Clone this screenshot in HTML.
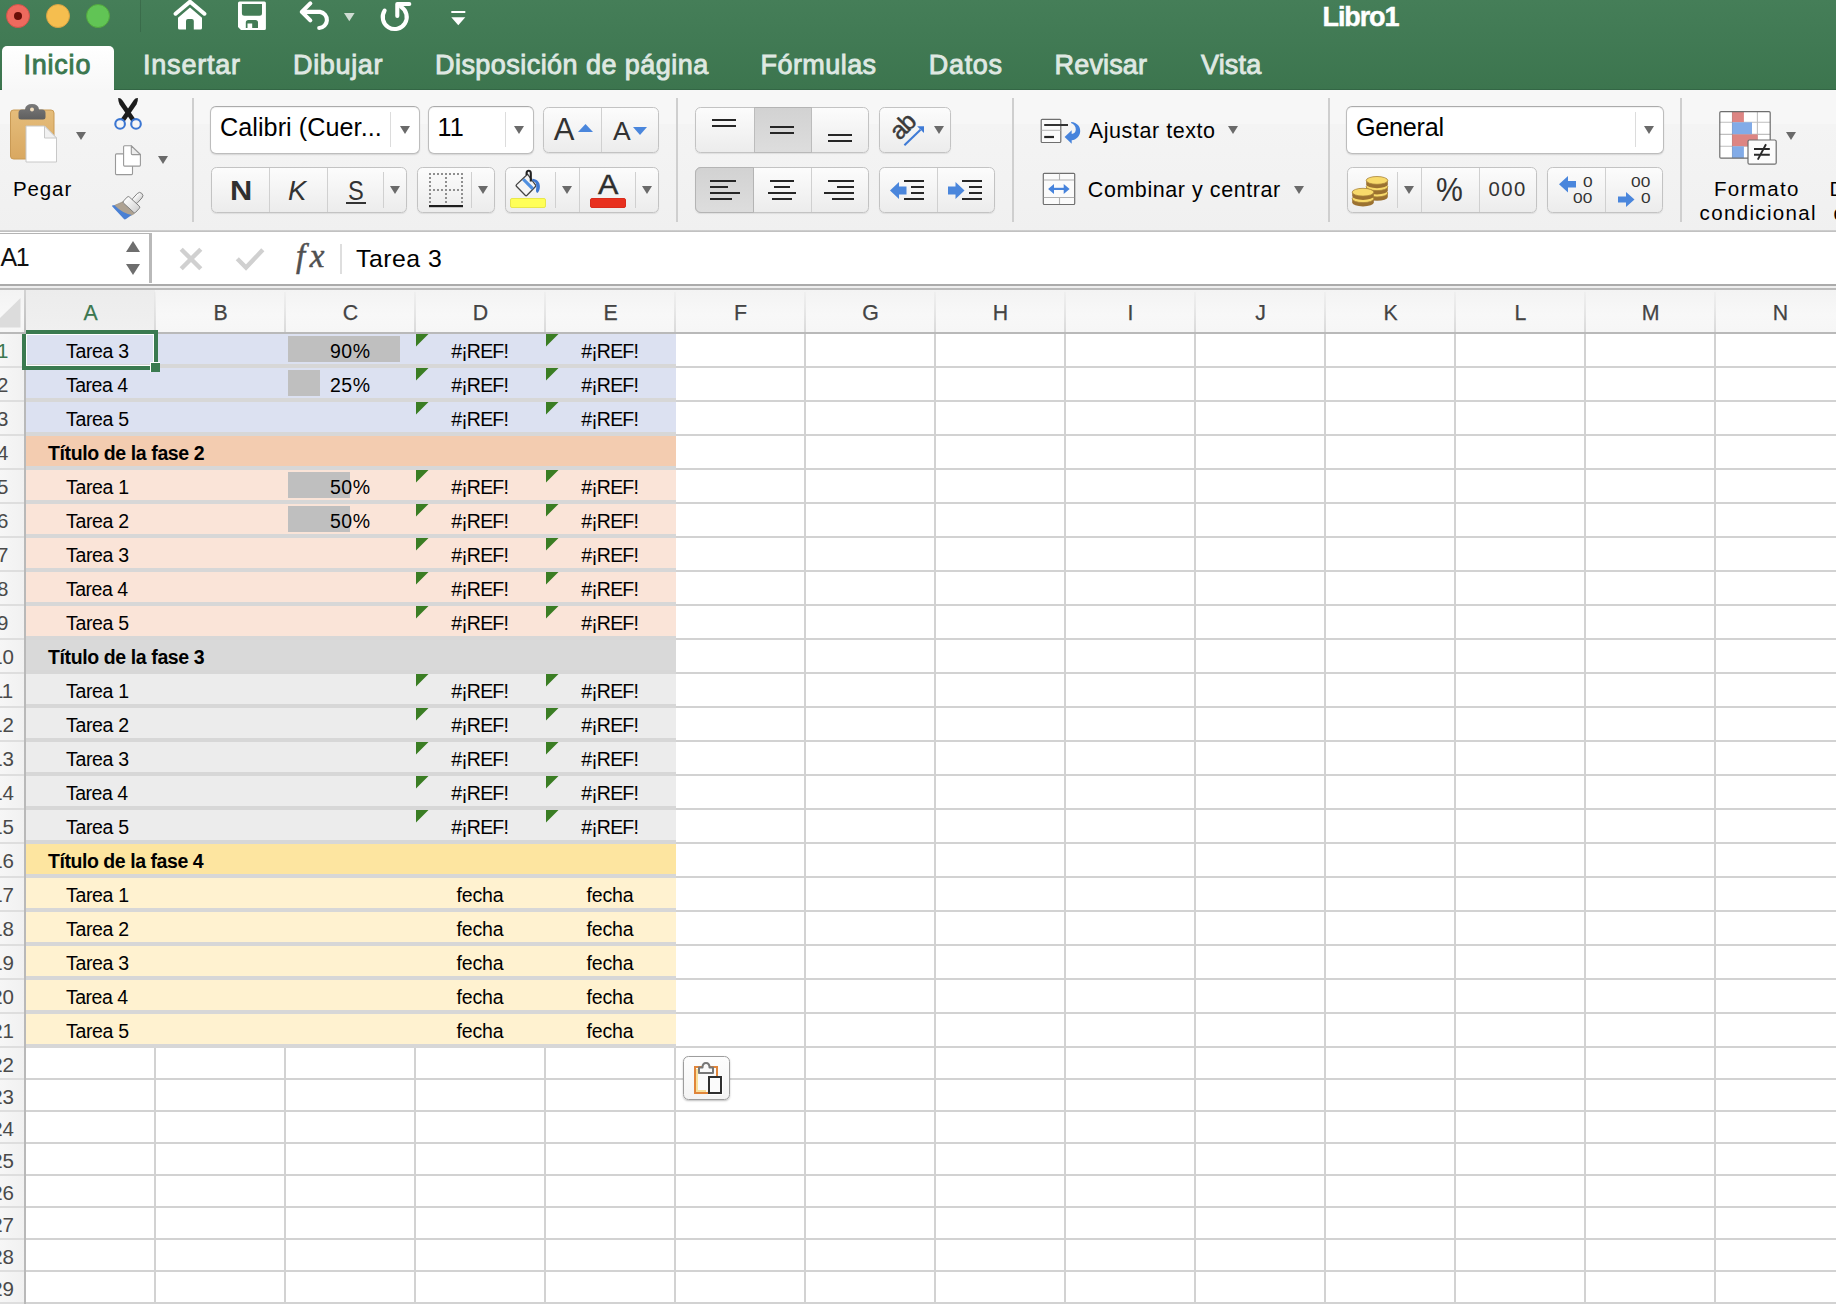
<!DOCTYPE html>
<html lang="es"><head><meta charset="utf-8"><title>Libro1</title>
<style>
html,body{margin:0;padding:0;background:#fff;}
body{width:1836px;height:1304px;overflow:hidden;font-family:"Liberation Sans",sans-serif;}
#app{position:relative;width:1836px;height:1304px;overflow:hidden;background:#fff;}
#app div,#app span.t,#app svg{position:absolute;box-sizing:border-box;}
#app svg{overflow:visible;display:block;}
span.t{white-space:pre;display:block;}
.btn{border:1px solid #c3c3c3;border-radius:5.5px;background:linear-gradient(#fcfcfc,#ececec);box-shadow:0 1px 1px rgba(0,0,0,.08);}
.combo{border:1px solid #bdbdbd;border-top-color:#ababab;border-radius:6px;background:#fff;box-shadow:0 1px 1.5px rgba(0,0,0,.12), inset 0 1px 1px rgba(0,0,0,.06);}
.vsep{background:#c9c9c9;width:1px;}
.sel{background:linear-gradient(#d3d3d3,#dcdcdc);}

</style></head>
<body>
<div id="app">
<div style="left:0px;top:0px;width:1836px;height:90px;background:linear-gradient(#457e58 0%,#417a54 45%,#3c754e 100%);"></div>
<div style="left:6px;top:4px;width:24px;height:24px;border-radius:50%;background:#ee6a5e;border:1px solid #cf544a;"></div>
<div style="left:46px;top:4px;width:24px;height:24px;border-radius:50%;background:#f5be4f;border:1px solid #d6a243;"></div>
<div style="left:86px;top:4px;width:24px;height:24px;border-radius:50%;background:#61c455;border:1px solid #52a73e;"></div>
<div style="left:14px;top:12px;width:8px;height:8px;border-radius:50%;background:#6a0e08;"></div>
<div style="left:140px;top:0px;width:1px;height:32px;background:rgba(0,0,0,.13);"></div>
<svg style="left:170px;top:0px;" width="40" height="32" viewBox="170 0 40 32"><path d="M175.600 13.700 L190 1.700 L204.400 13.700" fill="none" stroke="#fff" stroke-width="4" stroke-linecap="round" stroke-linejoin="miter"/><path d="M178 17.800 L190 7.500 L202 17.800 V28 Q202 29.500 200.500 29.500 H193.800 V21 Q193.800 19 191.800 19 H188 Q186 19 186 21 V29.500 H179.500 Q178 29.500 178 28 Z" fill="#fff"/></svg>
<svg style="left:236px;top:0px;" width="32" height="32" viewBox="236 0 32 32"><path d="M239.500 1.500 H264.400 Q265.900 1.500 265.900 3 V28.400 Q265.900 29.900 264.400 29.900 H241 L238 26.900 V3 Q238 1.500 239.500 1.500 Z M241.900 3.900 V13.200 Q241.900 15.700 244.400 15.700 H259.500 Q262 15.700 262 13.200 V3.900 Z M245.800 28 V22.600 Q245.800 20.100 248.300 20.100 H255.500 Q258 20.100 258 22.600 V28 H252.200 V23.500 H247.500 V28 Z" fill="#fff" fill-rule="evenodd"/></svg>
<svg style="left:296px;top:0px;" width="38" height="32" viewBox="296 0 38 32"><path d="M310.300 3.400 L301.800 11.900 L310.300 20.400" fill="none" stroke="#fff" stroke-width="4.100" stroke-linecap="round" stroke-linejoin="round"/><path d="M302.500 11.900 H320 A8.100 8.100 0 0 1 319.200 28" fill="none" stroke="#fff" stroke-width="4.100" stroke-linecap="round"/></svg>
<svg style="left:343.7px;top:12.7px;" width="11" height="8.5" viewBox="0 0 11 8.5"><path d="M0 0 H10.600 L5.300 8.200 Z" fill="#cfdcd3"/></svg>
<svg style="left:376px;top:0px;" width="38" height="34" viewBox="376 0 38 34"><path d="M384.600 10.600 A12 12 0 1 0 401 6.800" fill="none" stroke="#fff" stroke-width="4.100" stroke-linecap="round"/><path d="M397.300 16 V4 H409.300" fill="none" stroke="#fff" stroke-width="4.100" stroke-linecap="round" stroke-linejoin="round"/></svg>
<svg style="left:450px;top:10px;" width="17" height="17" viewBox="0 0 17 17"><rect x="1.300" y="1" width="14" height="2" fill="#fff"/><path d="M1.300 7.200 H15.300 L8.300 15.300 Z" fill="#fff"/></svg>
<span class="t" id="title" style="top:1.14px;font-size:27px;line-height:32px;color:#fff;font-weight:bold;letter-spacing:-1.100px;left:1322.5px;-webkit-text-stroke:.45px #fff;">Libro1</span>
<div style="left:2px;top:46px;width:112px;height:46px;border-radius:5px 5px 0 0;background:linear-gradient(#ffffff,#f7f7f7);"></div>
<span class="t" id="tab0" style="top:48.84px;font-size:27px;line-height:32px;color:#3b774f;letter-spacing:0.800px;left:23.4px;-webkit-text-stroke:0.9px #3b774f;">Inicio</span>
<span class="t" id="tab1" style="top:48.84px;font-size:27px;line-height:32px;color:#dfe8e2;letter-spacing:0.786px;left:143px;-webkit-text-stroke:0.9px #dfe8e2;">Insertar</span>
<span class="t" id="tab2" style="top:48.84px;font-size:27px;line-height:32px;color:#dfe8e2;letter-spacing:0.667px;left:293px;-webkit-text-stroke:0.9px #dfe8e2;">Dibujar</span>
<span class="t" id="tab3" style="top:48.84px;font-size:27px;line-height:32px;color:#dfe8e2;letter-spacing:0.450px;left:435px;-webkit-text-stroke:0.9px #dfe8e2;">Disposición de página</span>
<span class="t" id="tab4" style="top:48.84px;font-size:27px;line-height:32px;color:#dfe8e2;letter-spacing:0.443px;left:760.5px;-webkit-text-stroke:0.9px #dfe8e2;">Fórmulas</span>
<span class="t" id="tab5" style="top:48.84px;font-size:27px;line-height:32px;color:#dfe8e2;letter-spacing:0.675px;left:928.8px;-webkit-text-stroke:0.9px #dfe8e2;">Datos</span>
<span class="t" id="tab6" style="top:48.84px;font-size:27px;line-height:32px;color:#dfe8e2;letter-spacing:0.150px;left:1054.6px;-webkit-text-stroke:0.9px #dfe8e2;">Revisar</span>
<span class="t" id="tab7" style="top:48.84px;font-size:27px;line-height:32px;color:#dfe8e2;letter-spacing:0.175px;left:1201px;-webkit-text-stroke:0.9px #dfe8e2;">Vista</span>
<div style="left:114px;top:89px;width:1722px;height:1px;background:#336645;"></div>
<div style="left:0px;top:89px;width:2px;height:1px;background:#336645;"></div>
<div style="left:0px;top:90px;width:1836px;height:141px;background:linear-gradient(#f7f7f7 0%,#f7f7f7 24%,#f4f4f4 24.300%,#f0f0f0 100%);"></div>
<div style="left:114px;top:90px;width:1722px;height:1px;background:#356a46;opacity:.0"></div>
<div style="left:0px;top:230.3px;width:1836px;height:2px;background:linear-gradient(#d2d2d2,#bbbbbb);"></div>
<div style="left:192px;top:98px;width:2px;height:124px;background:#cfcfcf;"></div>
<div style="left:676px;top:98px;width:2px;height:124px;background:#cfcfcf;"></div>
<div style="left:1012px;top:98px;width:2px;height:124px;background:#cfcfcf;"></div>
<div style="left:1328px;top:98px;width:2px;height:124px;background:#cfcfcf;"></div>
<div style="left:1680px;top:98px;width:2px;height:124px;background:#cfcfcf;"></div>
<svg style="left:10px;top:103px;" width="48" height="60" viewBox="0 0 48 60"><defs><linearGradient id="cb" x1="0" y1="0" x2="0" y2="1"><stop offset="0" stop-color="#e5bd7b"/><stop offset="1" stop-color="#d9a861"/></linearGradient><linearGradient id="clip" x1="0" y1="0" x2="0" y2="1"><stop offset="0" stop-color="#7a7a7a"/><stop offset="1" stop-color="#5f5f5f"/></linearGradient></defs><rect x="0.5" y="7" width="43.5" height="49" rx="3" fill="url(#cb)" stroke="#c99a55" stroke-width="1"/><path d="M8.5 10 Q8.5 6.5 12 6.5 H15 Q15.5 1 22 1 Q28.500 1 29 6.500 H32 Q35.5 6.5 35.5 10 V14 Q35.5 16.5 33 16.5 H11 Q8.5 16.5 8.5 14 Z" fill="url(#clip)"/><circle cx="22" cy="6.4" r="2" fill="#f3e0c0"/><path d="M16 23 H34.5 L46.500 35 V59 H16 Z" fill="#fff" stroke="#c8c8c8" stroke-width="1"/><path d="M34.5 23 V35 H46.5 Z" fill="#f1f1f1" stroke="#c8c8c8" stroke-width="1" stroke-linejoin="round"/></svg>
<svg style="left:76px;top:132px;" width="10" height="8" viewBox="0 0 10 8"><path d="M0 0 H10 L5 8 Z" fill="#6a6a6a"/></svg>
<span class="t" id="pegar" style="top:176.40px;font-size:20.5px;line-height:25px;color:#000;letter-spacing:0.875px;left:13px;">Pegar</span>
<svg style="left:110px;top:94px;" width="36" height="40" viewBox="110 94 36 40"><path d="M118.200 98.100 Q120.800 97.900 122.400 100.200 L135.600 119.400 L131.600 121.800 L119.600 104.500 Q118 101.500 118.200 98.100 Z" fill="#1c1c1c"/><path d="M137.900 98.100 Q135.300 97.900 133.700 100.200 L120.500 119.400 L124.500 121.800 L136.500 104.500 Q138.100 101.500 137.900 98.100 Z" fill="#1c1c1c"/><circle cx="120.100" cy="123.900" r="4.800" fill="#f6f6f6" stroke="#3b76d2" stroke-width="2.100"/><circle cx="136" cy="123.900" r="4.800" fill="#f6f6f6" stroke="#3b76d2" stroke-width="2.100"/></svg>
<svg style="left:112px;top:142px;" width="32" height="36" viewBox="112 142 32 36"><rect x="115.500" y="153.900" width="17" height="20.700" rx="1" fill="#fff" stroke="#999" stroke-width="1.100"/><path d="M124.600 145.800 H131.300 L140.400 154.600 V165.100 Q140.400 166.100 139.400 166.100 H124.600 Q123.600 166.100 123.600 165.100 V146.800 Q123.600 145.800 124.600 145.800 Z" fill="#fff" stroke="#999" stroke-width="1.100"/><path d="M131.300 145.800 V153.600 Q131.300 154.600 132.300 154.600 H140.400 Z" fill="#ececec" stroke="#999" stroke-width="1.100" stroke-linejoin="round"/></svg>
<svg style="left:158px;top:156.3px;" width="10" height="8" viewBox="0 0 10 8"><path d="M0 0 H10 L5 8 Z" fill="#6a6a6a"/></svg>
<svg style="left:108px;top:188px;" width="40" height="36" viewBox="108 188 40 36"><defs><linearGradient id="fer" x1="0" y1="0" x2="1" y2="0"><stop offset="0" stop-color="#fdfdfd"/><stop offset="1" stop-color="#d4d4d4"/></linearGradient></defs><path d="M123.100 201.700 L134.400 213.500 L131.700 215.100 L124 214 L114.400 205.500 Z" fill="#aea292" stroke="#8c8172" stroke-width=".600"/><path d="M114.400 205.300 Q122 213 131.700 215.100 L126 219 Q124.700 219.900 123.700 218.800 L112.300 206.600 Q111.500 205.500 112.800 205.300 Z" fill="#4a80d4"/><g transform="translate(131.450 204.650) rotate(42.500)"><rect x="-3.200" y="-15.300" width="6.400" height="13" rx="3.200" fill="url(#fer)" stroke="#7d7d7d" stroke-width=".900"/><rect x="-8.300" y="-4.200" width="16.600" height="8.400" rx="1.600" fill="url(#fer)" stroke="#7d7d7d" stroke-width=".900"/></g></svg>
<div class="combo" style="left:210px;top:106px;width:210px;height:48px;"></div>
<div style="left:390px;top:112px;width:1px;height:35px;background:#dcdcdc;"></div>
<svg style="left:400px;top:126px;" width="10" height="8" viewBox="0 0 10 8"><path d="M0 0 H10 L5 8 Z" fill="#6a6a6a"/></svg>
<span class="t" id="fontname" style="top:112.27px;font-size:25.2px;line-height:30px;color:#000;letter-spacing:0.053px;left:220px;">Calibri (Cuer...</span>
<div class="combo" style="left:428px;top:106px;width:106px;height:48px;"></div>
<div style="left:505px;top:112px;width:1px;height:35px;background:#dcdcdc;"></div>
<svg style="left:514px;top:126px;" width="10" height="8" viewBox="0 0 10 8"><path d="M0 0 H10 L5 8 Z" fill="#6a6a6a"/></svg>
<span class="t" id="fontsize" style="top:112.27px;font-size:25.2px;line-height:30px;color:#000;left:437.5px;">11</span>
<div class="btn" style="left:543px;top:107px;width:116px;height:46px;"></div>
<div style="left:601px;top:108px;width:1px;height:44px;background:#d0d0d0;"></div>
<span class="t" id="Abig" style="top:110.66px;font-size:31px;line-height:37px;color:#333;left:553.8px;">A</span>
<svg style="left:577.5px;top:124px;" width="15" height="8" viewBox="0 0 15 8"><path d="M0 8 L7.500 0 L15 8 Z" fill="#4a86dc"/></svg>
<span class="t" id="Asmall" style="top:114.72px;font-size:26.5px;line-height:32px;color:#333;left:613px;">A</span>
<svg style="left:633px;top:127px;" width="14" height="8" viewBox="0 0 14 8"><path d="M0 0 H14 L7 8 Z" fill="#4a86dc"/></svg>
<div class="btn" style="left:211px;top:167px;width:196px;height:46px;"></div>
<div style="left:269px;top:168px;width:1px;height:44px;background:#d0d0d0;"></div>
<div style="left:327px;top:168px;width:1px;height:44px;background:#d0d0d0;"></div>
<div style="left:383px;top:172px;width:1px;height:36px;background:#d0d0d0;"></div>
<span class="t" id="bN" style="top:173.77px;font-size:27.5px;line-height:33px;color:#303030;font-weight:bold;left:229.5px;transform:scaleX(1.12);transform-origin:0 0;">N</span>
<span class="t" id="bK" style="top:173.77px;font-size:27.5px;line-height:33px;color:#333;font-style:italic;left:288px;">K</span>
<span class="t" id="bS" style="top:173.77px;font-size:27.5px;line-height:33px;color:#333;left:348.3px;transform:scaleX(.86);transform-origin:0 0;">S</span>
<div style="left:346px;top:202px;width:20px;height:2px;background:#333;"></div>
<svg style="left:390px;top:186px;" width="10" height="8" viewBox="0 0 10 8"><path d="M0 0 H10 L5 8 Z" fill="#6a6a6a"/></svg>
<div class="btn" style="left:417px;top:167px;width:78px;height:46px;"></div>
<svg style="left:428px;top:172px;" width="37" height="37" viewBox="428 172 37 37"><g stroke="#8f8f8f" stroke-width="2" stroke-dasharray="2 2" fill="none"><path d="M429 174 H463"/><path d="M429 190 H463"/><path d="M430 173 V203"/><path d="M446 173 V203"/><path d="M462 173 V203"/></g><rect x="429" y="205" width="34" height="2.200" fill="#1e1e1e"/></svg>
<div style="left:471px;top:172px;width:1px;height:36px;background:#d0d0d0;"></div>
<svg style="left:478px;top:186px;" width="10" height="8" viewBox="0 0 10 8"><path d="M0 0 H10 L5 8 Z" fill="#6a6a6a"/></svg>
<div class="btn" style="left:505px;top:167px;width:154px;height:46px;"></div>
<div style="left:579px;top:168px;width:1px;height:44px;background:#d0d0d0;"></div>
<svg style="left:508px;top:166px;" width="40" height="32" viewBox="508 166 40 32"><path d="M527.500 174.200 L535.600 185.200 Q536.100 185.900 535.500 186.500 L527 195.300 Q526.100 196.100 525.200 195.300 L516.400 186.300 Q515.700 185.400 516.500 184.600 Z" fill="#f5f5f5" stroke="#444" stroke-width="1.300" stroke-linejoin="round"/><path d="M524.500 178.200 L533.800 187.500 L531.700 189.900 L522.100 180.300 Z" fill="#4f8fe0"/><path d="M532.400 178.800 C536.500 179 540.200 182 539.900 187 C539.700 190 538.800 192 537.400 193 C536.300 192.300 535.900 191.500 536 190 C536.600 186 536.500 183.500 535 182.200 C534 181.400 533 181.200 532.400 181.200 Z" fill="#3f78d0"/><path d="M526.600 175 V173.300 A2.100 2.500 0 0 1 530.800 173.300 V181.500" fill="none" stroke="#222" stroke-width="2.100"/></svg>
<div style="left:510px;top:198px;width:36px;height:10px;background:#ffff57;border:1px solid #e9e74b;border-radius:2px;"></div>
<div style="left:555px;top:172px;width:1px;height:36px;background:#d0d0d0;"></div>
<svg style="left:562px;top:186px;" width="10" height="8" viewBox="0 0 10 8"><path d="M0 0 H10 L5 8 Z" fill="#6a6a6a"/></svg>
<span class="t" id="Acolor" style="top:166.99px;font-size:28.3px;line-height:34px;color:#2e2e2e;left:597.7px;transform:scaleX(1.08);transform-origin:0 0;-webkit-text-stroke:.4px #2e2e2e;">A</span>
<div style="left:590px;top:198px;width:36px;height:10px;background:#e8301e;border:1px solid #d92c1c;border-radius:2px;"></div>
<div style="left:635px;top:172px;width:1px;height:36px;background:#d0d0d0;"></div>
<svg style="left:642px;top:186px;" width="10" height="8" viewBox="0 0 10 8"><path d="M0 0 H10 L5 8 Z" fill="#6a6a6a"/></svg>
<div class="btn" style="left:695px;top:107px;width:174px;height:46px;"></div>
<div style="left:753.5px;top:107px;width:58px;height:46px;background:linear-gradient(#d2d2d2,#dddddd);border-top:1px solid #b4b4b4;border-bottom:1px solid #b9b9b9;border-left:1px solid #bcbcbc;border-right:1px solid #bcbcbc;"></div>
<div style="left:712px;top:118.5px;width:24px;height:2px;background:#262626;"></div>
<div style="left:712px;top:124.5px;width:24px;height:2px;background:#262626;"></div>
<div style="left:770px;top:126px;width:24px;height:2px;background:#262626;"></div>
<div style="left:770px;top:132px;width:24px;height:2px;background:#262626;"></div>
<div style="left:828px;top:134px;width:24px;height:2px;background:#262626;"></div>
<div style="left:828px;top:140px;width:24px;height:2px;background:#262626;"></div>
<div style="left:811.5px;top:108px;width:1px;height:44px;background:#d0d0d0;opacity:0"></div>
<div class="btn" style="left:695px;top:167px;width:174px;height:46px;"></div>
<div style="left:695px;top:167px;width:58.5px;height:46px;background:linear-gradient(#d2d2d2,#dddddd);border:1px solid #b4b4b4;border-radius:6px 0 0 6px;"></div>
<div style="left:811px;top:168px;width:1px;height:44px;background:#d0d0d0;"></div>
<div style="left:710px;top:179.8px;width:26px;height:2px;background:#262626;"></div>
<div style="left:710px;top:185.9px;width:18px;height:2px;background:#262626;"></div>
<div style="left:710px;top:192.0px;width:30px;height:2px;background:#262626;"></div>
<div style="left:710px;top:198.10000000000002px;width:22px;height:2px;background:#262626;"></div>
<div style="left:770px;top:179.8px;width:24px;height:2px;background:#262626;"></div>
<div style="left:774px;top:185.9px;width:16px;height:2px;background:#262626;"></div>
<div style="left:768px;top:192.0px;width:28px;height:2px;background:#262626;"></div>
<div style="left:772px;top:198.10000000000002px;width:20px;height:2px;background:#262626;"></div>
<div style="left:828px;top:179.8px;width:26px;height:2px;background:#262626;"></div>
<div style="left:836.5px;top:185.9px;width:17.5px;height:2px;background:#262626;"></div>
<div style="left:824px;top:192.0px;width:30px;height:2px;background:#262626;"></div>
<div style="left:832px;top:198.10000000000002px;width:22px;height:2px;background:#262626;"></div>
<div class="btn" style="left:879px;top:107px;width:72px;height:46px;"></div>
<svg style="left:880px;top:108px" width="70" height="44" viewBox="880 108 70 44"><text x="899.500" y="141" transform="rotate(-45 899.500 141)" font-family="Liberation Sans, sans-serif" font-size="24.500" letter-spacing="-1.300" fill="#3a3a3a" stroke="#3a3a3a" stroke-width=".500">ab</text><path d="M904.400 145.300 L920.500 129.700" stroke="#3f7bd6" stroke-width="2.100" fill="none"/><path d="M924 126.200 H917.100 L924 132.900 Z" fill="#3f7bd6"/></svg>
<svg style="left:934px;top:126px;" width="10" height="8" viewBox="0 0 10 8"><path d="M0 0 H10 L5 8 Z" fill="#6a6a6a"/></svg>
<div class="btn" style="left:879px;top:167px;width:116px;height:46px;"></div>
<div style="left:937px;top:168px;width:1px;height:44px;background:#d0d0d0;"></div>
<div style="left:904px;top:179.8px;width:20px;height:2px;background:#262626;"></div>
<div style="left:910.5px;top:185.9px;width:13.5px;height:2px;background:#262626;"></div>
<div style="left:910.5px;top:192.0px;width:13.5px;height:2px;background:#262626;"></div>
<div style="left:904px;top:198.10000000000002px;width:20px;height:2px;background:#262626;"></div>
<svg style="left:889.5px;top:181.5px;" width="17" height="17" viewBox="0 0 17 17"><path d="M16.500 4.500 H9 V0 L0 8.500 L9 17 V12.500 H16.500 Z" fill="#4a86dc"/></svg>
<div style="left:962px;top:179.8px;width:20px;height:2px;background:#262626;"></div>
<div style="left:968.5px;top:185.9px;width:13.5px;height:2px;background:#262626;"></div>
<div style="left:968.5px;top:192.0px;width:13.5px;height:2px;background:#262626;"></div>
<div style="left:962px;top:198.10000000000002px;width:20px;height:2px;background:#262626;"></div>
<svg style="left:947.5px;top:181.5px;" width="17" height="17" viewBox="0 0 17 17"><path d="M0 4.500 H7.500 V0 L16.500 8.500 L7.500 17 V12.500 H0 Z" fill="#4a86dc"/></svg>
<svg style="left:1038px;top:116px;" width="46" height="30" viewBox="1038 116 46 30"><rect x="1041.200" y="119.300" width="19.600" height="23.200" rx="1" fill="#fbfbfb" stroke="#6f6f6f" stroke-width="1.200"/><path d="M1041.500 130.300 H1060.500" stroke="#b5b5b5" stroke-width="1"/><path d="M1044.200 125 H1068" stroke="#333" stroke-width="2"/><path d="M1044.200 137 H1054" stroke="#262626" stroke-width="2.200"/><path d="M1071.300 122 C1077 122.500 1080.400 126.500 1080.200 131.200 C1080 136.500 1076 139.800 1071.700 140.200 L1071.700 143.800 L1064.600 136.900 L1071.700 130.300 L1071.700 134 C1074 133.800 1075.800 132.200 1075.800 129.500 C1075.800 126.500 1074 124 1071 123 Z" fill="#4683dc"/></svg>
<span class="t" id="ajustar" style="top:117.75px;font-size:21.5px;line-height:26px;color:#000;letter-spacing:0.558px;left:1088.8px;">Ajustar texto</span>
<svg style="left:1228px;top:126px;" width="10" height="8" viewBox="0 0 10 8"><path d="M0 0 H10 L5 8 Z" fill="#6a6a6a"/></svg>
<svg style="left:1041px;top:171px;" width="36" height="36" viewBox="1041 171 36 36"><rect x="1043.300" y="173.300" width="31.400" height="31.200" rx="1" fill="#fbfbfb" stroke="#6f6f6f" stroke-width="1.200"/><path d="M1043.800 180 H1074.200 M1043.800 197.500 H1074.200 M1059.500 173.800 V180 M1059.500 197.500 V204" stroke="#b0b0b0" stroke-width="1.100" fill="none"/><path d="M1053 188.900 H1065" stroke="#4683dc" stroke-width="2.200"/><path d="M1048.100 188.900 L1054 183.900 V193.900 Z M1069.600 188.900 L1063.700 183.900 V193.900 Z" fill="#4683dc"/></svg>
<span class="t" id="combinar" style="top:177.15px;font-size:21.5px;line-height:26px;color:#000;letter-spacing:0.559px;left:1087.8px;">Combinar y centrar</span>
<svg style="left:1294px;top:186px;" width="10" height="8" viewBox="0 0 10 8"><path d="M0 0 H10 L5 8 Z" fill="#6a6a6a"/></svg>
<div class="combo" style="left:1346px;top:106px;width:318px;height:48px;"></div>
<div style="left:1635px;top:112px;width:1px;height:35px;background:#dcdcdc;"></div>
<svg style="left:1644px;top:126px;" width="10" height="8" viewBox="0 0 10 8"><path d="M0 0 H10 L5 8 Z" fill="#6a6a6a"/></svg>
<span class="t" id="general" style="top:112.27px;font-size:25.2px;line-height:30px;color:#000;letter-spacing:-0.250px;left:1356px;">General</span>
<div class="btn" style="left:1347px;top:167px;width:190px;height:46px;"></div>
<div style="left:1397px;top:172px;width:1px;height:36px;background:#d0d0d0;"></div>
<div style="left:1421px;top:168px;width:1px;height:44px;background:#d0d0d0;"></div>
<div style="left:1479px;top:168px;width:1px;height:44px;background:#d0d0d0;"></div>
<svg style="left:1350px;top:174px;" width="40" height="34" viewBox="1350 174 40 34"><path d="M1366.2 193 V196.9 A10.8 3.9 0 0 0 1387.8 196.9 V193 Z" fill="#9b7130"/><ellipse cx="1377" cy="193" rx="10.8" ry="3.9" fill="#f8da6b" stroke="#a9843a" stroke-width=".800"/><path d="M1366.2 186.7 V190.6 A10.8 3.9 0 0 0 1387.8 190.6 V186.7 Z" fill="#9b7130"/><ellipse cx="1377" cy="186.7" rx="10.8" ry="3.9" fill="#f8da6b" stroke="#a9843a" stroke-width=".800"/><path d="M1366.2 180.4 V184.3 A10.8 3.9 0 0 0 1387.8 184.3 V180.4 Z" fill="#9b7130"/><ellipse cx="1377" cy="180.4" rx="10.8" ry="3.9" fill="#f8da6b" stroke="#a9843a" stroke-width=".800"/><path d="M1352.2 198.7 V202.6 A10.8 3.9 0 0 0 1373.8 202.6 V198.7 Z" fill="#9b7130"/><ellipse cx="1363" cy="198.7" rx="10.8" ry="3.9" fill="#f8da6b" stroke="#a9843a" stroke-width=".800"/><path d="M1352.2 192.2 V196.1 A10.8 3.9 0 0 0 1373.8 196.1 V192.2 Z" fill="#9b7130"/><ellipse cx="1363" cy="192.2" rx="10.8" ry="3.9" fill="#f8da6b" stroke="#a9843a" stroke-width=".800"/></svg>
<svg style="left:1404px;top:186px;" width="10" height="8" viewBox="0 0 10 8"><path d="M0 0 H10 L5 8 Z" fill="#6a6a6a"/></svg>
<span class="t" id="pct" style="top:170.39px;font-size:33.5px;line-height:40px;color:#333;left:1436px;transform:scaleX(.9);transform-origin:0 0;">%</span>
<span class="t" id="k000" style="top:176.97px;font-size:20.3px;line-height:24px;color:#333;letter-spacing:1.500px;left:1488.5px;">000</span>
<div class="btn" style="left:1547px;top:167px;width:116px;height:46px;"></div>
<div style="left:1605px;top:168px;width:1px;height:44px;background:#d0d0d0;"></div>
<span class="t" id="d1" style="top:173.20px;font-size:15.3px;line-height:18px;color:#333;left:1582.8px;transform:scaleX(1.13);transform-origin:0 0;letter-spacing:.2px;">0</span>
<span class="t" id="d2" style="top:189.40px;font-size:15.3px;line-height:18px;color:#333;left:1572.5px;transform:scaleX(1.13);transform-origin:0 0;letter-spacing:.2px;">00</span>
<svg style="left:1559px;top:176px;" width="18" height="17" viewBox="0 0 18 17"><path d="M17 5 H9 V0 L0 8.200 L9 16.500 V11.500 H17 Z" fill="#4a86dc"/></svg>
<span class="t" id="d3" style="top:173.20px;font-size:15.3px;line-height:18px;color:#333;left:1631px;transform:scaleX(1.13);transform-origin:0 0;letter-spacing:.2px;">00</span>
<span class="t" id="d4" style="top:189.40px;font-size:15.3px;line-height:18px;color:#333;left:1640.9px;transform:scaleX(1.13);transform-origin:0 0;letter-spacing:.2px;">0</span>
<svg style="left:1618px;top:191.5px;" width="17" height="16" viewBox="0 0 17 16"><path d="M0 4.500 H8 V0 L16.500 7.500 L8 15 V10.500 H0 Z" fill="#4a86dc"/></svg>
<svg style="left:1715px;top:108px;" width="66" height="60" viewBox="1715 108 66 60"><rect x="1719.800" y="111.600" width="50.400" height="46.600" rx="1" fill="#fff"/><path d="M1757.400 111.600 V158 M1719.800 122.300 H1770.200 M1719.800 134.400 H1770.200 M1719.800 146.300 H1770.200" stroke="#bfbfbf" stroke-width="1.100" fill="none"/><rect x="1732.100" y="111.600" width="11.800" height="10.700" fill="#dd8583"/><rect x="1732.100" y="122.300" width="19.900" height="12.100" fill="#82abe7"/><rect x="1732.100" y="134.400" width="25.600" height="11.900" fill="#dd8583"/><rect x="1732.100" y="146.300" width="11.800" height="11.900" fill="#82abe7"/><path d="M1732.300 111.600 V158" stroke="#000" stroke-opacity=".12" stroke-width="1"/><rect x="1719.800" y="111.600" width="50.400" height="46.600" rx="1.200" fill="none" stroke="#6e6e6e" stroke-width="1.200"/><rect x="1748" y="140" width="28.200" height="24.200" rx="1.500" fill="#fcfcfc" stroke="#6e6e6e" stroke-width="1.200"/><path d="M1754 149 H1769.800 M1754 154.700 H1769.800 M1766 144.200 L1757.800 159.600" stroke="#2a2a2a" stroke-width="1.900" fill="none"/></svg>
<svg style="left:1786px;top:132px;" width="10" height="8" viewBox="0 0 10 8"><path d="M0 0 H10 L5 8 Z" fill="#6a6a6a"/></svg>
<span class="t" id="formato" style="top:175.90px;font-size:20.5px;line-height:25px;color:#000;letter-spacing:1.333px;left:1714px;">Formato</span>
<span class="t" id="condicional" style="top:200.00px;font-size:20.5px;line-height:25px;color:#000;letter-spacing:1.340px;left:1699.6px;">condicional</span>
<span class="t" id="dd" style="top:175.90px;font-size:20.5px;line-height:25px;color:#000;left:1829.5px;">D</span>
<span class="t" id="dd2" style="top:200.00px;font-size:20.5px;line-height:25px;color:#000;left:1833.5px;">d</span>
<div style="left:0px;top:233px;width:1836px;height:51px;background:#fff;"></div>
<div style="left:149px;top:233px;width:2.5px;height:50px;background:#b9b9b9;"></div>
<div style="left:0px;top:284px;width:1836px;height:2px;background:#ababab;"></div>
<div style="left:0px;top:286px;width:1836px;height:2px;background:#eeeeee;"></div>
<div style="left:0px;top:288px;width:1836px;height:2px;background:#bbbbbb;"></div>
<div style="left:0px;top:232.5px;width:150px;height:1.5px;background:#b4b4b4;"></div>
<span class="t" id="namebox" style="top:242.04px;font-size:25px;line-height:30px;color:#111;letter-spacing:-1.500px;left:0.5px;">A1</span>
<svg style="left:126px;top:241px;" width="14" height="35" viewBox="0 0 14 35"><path d="M0 11 L7 0 L14 11 Z" fill="#6e6e6e"/><path d="M0 23 H14 L7 34 Z" fill="#6e6e6e"/></svg>
<svg style="left:178px;top:246px;" width="26" height="26" viewBox="0 0 26 26"><path d="M3.200 3.200 L22.800 22.800 M22.800 3.200 L3.200 22.800" stroke="#d0d0d0" stroke-width="4.400" stroke-linecap="butt"/></svg>
<svg style="left:234px;top:246px;" width="32" height="26" viewBox="0 0 32 26"><path d="M3.300 12.800 L12 21.500 L28.800 3.800" stroke="#d0d0d0" stroke-width="4.400" stroke-linecap="butt" stroke-linejoin="miter" fill="none"/></svg>
<span class="t" id="fx" style="top:236.07px;font-size:33px;line-height:40px;color:#505050;font-style:italic;font-family:'Liberation Serif',serif;letter-spacing:4.500px;left:296px;-webkit-text-stroke:.5px #505050;">fx</span>
<div style="left:340px;top:244px;width:1.5px;height:30px;background:#dedede;"></div>
<span class="t" id="ftext" style="top:244.11px;font-size:24.8px;line-height:30px;color:#000;letter-spacing:0.500px;left:356px;">Tarea 3</span>
<div style="left:26px;top:334px;width:1810px;height:714px;background-color:#fff;background-image:repeating-linear-gradient(to right,transparent 0,transparent 128px,#d2d2d2 128px,#d2d2d2 130px),repeating-linear-gradient(to bottom,transparent 0,transparent 32px,#d2d2d2 32px,#d2d2d2 34px);"></div>
<div style="left:26px;top:1048px;width:1810px;height:256px;background-color:#fff;background-image:repeating-linear-gradient(to right,transparent 0,transparent 128px,#d2d2d2 128px,#d2d2d2 130px),repeating-linear-gradient(to bottom,transparent 0,transparent 30px,#d2d2d2 30px,#d2d2d2 32px);"></div>
<div style="left:0px;top:290px;width:1836px;height:42px;background:linear-gradient(#f3f3f3,#f8f8f8 60%,#f6f6f6);"></div>
<div style="left:26px;top:290px;width:129px;height:42px;background:linear-gradient(#ececec,#f0f0f0);"></div>
<div style="left:0px;top:332px;width:1836px;height:2px;background:#b9b9b9;"></div>
<svg style="left:0px;top:297px;" width="21" height="31" viewBox="0 0 21 31"><path d="M20.500 1 V30.500 H0 V21 Z" fill="#dcdcdc"/></svg>
<div style="left:24px;top:290px;width:2px;height:42px;background:linear-gradient(#d3d3d3,#bebebe);"></div>
<span class="t" id="colA" style="top:299.62px;font-size:21.3px;line-height:26px;color:#3b774f;left:90.5px;transform:translateX(-50%);-webkit-text-stroke:.25px #3b774f;">A</span>
<div style="left:154px;top:292px;width:2px;height:40px;background:linear-gradient(rgba(215,215,215,.15),#d9d9d9);"></div>
<span class="t" id="colB" style="top:299.62px;font-size:21.3px;line-height:26px;color:#444;left:220.5px;transform:translateX(-50%);-webkit-text-stroke:.25px #444;">B</span>
<div style="left:284px;top:292px;width:2px;height:40px;background:linear-gradient(rgba(215,215,215,.15),#d9d9d9);"></div>
<span class="t" id="colC" style="top:299.62px;font-size:21.3px;line-height:26px;color:#444;left:350.5px;transform:translateX(-50%);-webkit-text-stroke:.25px #444;">C</span>
<div style="left:414px;top:292px;width:2px;height:40px;background:linear-gradient(rgba(215,215,215,.15),#d9d9d9);"></div>
<span class="t" id="colD" style="top:299.62px;font-size:21.3px;line-height:26px;color:#444;left:480.5px;transform:translateX(-50%);-webkit-text-stroke:.25px #444;">D</span>
<div style="left:544px;top:292px;width:2px;height:40px;background:linear-gradient(rgba(215,215,215,.15),#d9d9d9);"></div>
<span class="t" id="colE" style="top:299.62px;font-size:21.3px;line-height:26px;color:#444;left:610.5px;transform:translateX(-50%);-webkit-text-stroke:.25px #444;">E</span>
<div style="left:674px;top:292px;width:2px;height:40px;background:linear-gradient(rgba(215,215,215,.15),#d9d9d9);"></div>
<span class="t" id="colF" style="top:299.62px;font-size:21.3px;line-height:26px;color:#444;left:740.5px;transform:translateX(-50%);-webkit-text-stroke:.25px #444;">F</span>
<div style="left:804px;top:292px;width:2px;height:40px;background:linear-gradient(rgba(215,215,215,.15),#d9d9d9);"></div>
<span class="t" id="colG" style="top:299.62px;font-size:21.3px;line-height:26px;color:#444;left:870.5px;transform:translateX(-50%);-webkit-text-stroke:.25px #444;">G</span>
<div style="left:934px;top:292px;width:2px;height:40px;background:linear-gradient(rgba(215,215,215,.15),#d9d9d9);"></div>
<span class="t" id="colH" style="top:299.62px;font-size:21.3px;line-height:26px;color:#444;left:1000.5px;transform:translateX(-50%);-webkit-text-stroke:.25px #444;">H</span>
<div style="left:1064px;top:292px;width:2px;height:40px;background:linear-gradient(rgba(215,215,215,.15),#d9d9d9);"></div>
<span class="t" id="colI" style="top:299.62px;font-size:21.3px;line-height:26px;color:#444;left:1130.5px;transform:translateX(-50%);-webkit-text-stroke:.25px #444;">I</span>
<div style="left:1194px;top:292px;width:2px;height:40px;background:linear-gradient(rgba(215,215,215,.15),#d9d9d9);"></div>
<span class="t" id="colJ" style="top:299.62px;font-size:21.3px;line-height:26px;color:#444;left:1260.5px;transform:translateX(-50%);-webkit-text-stroke:.25px #444;">J</span>
<div style="left:1324px;top:292px;width:2px;height:40px;background:linear-gradient(rgba(215,215,215,.15),#d9d9d9);"></div>
<span class="t" id="colK" style="top:299.62px;font-size:21.3px;line-height:26px;color:#444;left:1390.5px;transform:translateX(-50%);-webkit-text-stroke:.25px #444;">K</span>
<div style="left:1454px;top:292px;width:2px;height:40px;background:linear-gradient(rgba(215,215,215,.15),#d9d9d9);"></div>
<span class="t" id="colL" style="top:299.62px;font-size:21.3px;line-height:26px;color:#444;left:1520.5px;transform:translateX(-50%);-webkit-text-stroke:.25px #444;">L</span>
<div style="left:1584px;top:292px;width:2px;height:40px;background:linear-gradient(rgba(215,215,215,.15),#d9d9d9);"></div>
<span class="t" id="colM" style="top:299.62px;font-size:21.3px;line-height:26px;color:#444;left:1650.5px;transform:translateX(-50%);-webkit-text-stroke:.25px #444;">M</span>
<div style="left:1714px;top:292px;width:2px;height:40px;background:linear-gradient(rgba(215,215,215,.15),#d9d9d9);"></div>
<span class="t" id="colN" style="top:299.62px;font-size:21.3px;line-height:26px;color:#444;left:1780.5px;transform:translateX(-50%);-webkit-text-stroke:.25px #444;">N</span>
<div style="left:1844px;top:292px;width:2px;height:40px;background:linear-gradient(rgba(215,215,215,.15),#d9d9d9);"></div>
<div style="left:0px;top:334px;width:24px;height:970px;background:linear-gradient(to right,#f6f6f6,#f1f1f1);"></div>
<div style="left:24px;top:334px;width:2px;height:970px;background:#b9b9b9;"></div>
<div style="left:0px;top:366px;width:24px;height:2px;background:#dedede;"></div>
<span class="t" id="row1" style="top:338.10px;font-size:20.5px;line-height:25px;color:#3b774f;left:2.6px;transform:translateX(-50%);">1</span>
<div style="left:0px;top:400px;width:24px;height:2px;background:#dedede;"></div>
<span class="t" id="row2" style="top:372.10px;font-size:20.5px;line-height:25px;color:#4a4a4a;left:2.6px;transform:translateX(-50%);">2</span>
<div style="left:0px;top:434px;width:24px;height:2px;background:#dedede;"></div>
<span class="t" id="row3" style="top:406.10px;font-size:20.5px;line-height:25px;color:#4a4a4a;left:2.6px;transform:translateX(-50%);">3</span>
<div style="left:0px;top:468px;width:24px;height:2px;background:#dedede;"></div>
<span class="t" id="row4" style="top:440.10px;font-size:20.5px;line-height:25px;color:#4a4a4a;left:2.6px;transform:translateX(-50%);">4</span>
<div style="left:0px;top:502px;width:24px;height:2px;background:#dedede;"></div>
<span class="t" id="row5" style="top:474.10px;font-size:20.5px;line-height:25px;color:#4a4a4a;left:2.6px;transform:translateX(-50%);">5</span>
<div style="left:0px;top:536px;width:24px;height:2px;background:#dedede;"></div>
<span class="t" id="row6" style="top:508.10px;font-size:20.5px;line-height:25px;color:#4a4a4a;left:2.6px;transform:translateX(-50%);">6</span>
<div style="left:0px;top:570px;width:24px;height:2px;background:#dedede;"></div>
<span class="t" id="row7" style="top:542.10px;font-size:20.5px;line-height:25px;color:#4a4a4a;left:2.6px;transform:translateX(-50%);">7</span>
<div style="left:0px;top:604px;width:24px;height:2px;background:#dedede;"></div>
<span class="t" id="row8" style="top:576.10px;font-size:20.5px;line-height:25px;color:#4a4a4a;left:2.6px;transform:translateX(-50%);">8</span>
<div style="left:0px;top:638px;width:24px;height:2px;background:#dedede;"></div>
<span class="t" id="row9" style="top:610.10px;font-size:20.5px;line-height:25px;color:#4a4a4a;left:2.6px;transform:translateX(-50%);">9</span>
<div style="left:0px;top:672px;width:24px;height:2px;background:#dedede;"></div>
<span class="t" id="row10" style="top:644.10px;font-size:20.5px;line-height:25px;color:#4a4a4a;left:2.6px;transform:translateX(-50%);">10</span>
<div style="left:0px;top:706px;width:24px;height:2px;background:#dedede;"></div>
<span class="t" id="row11" style="top:678.10px;font-size:20.5px;line-height:25px;color:#4a4a4a;left:2.6px;transform:translateX(-50%);">11</span>
<div style="left:0px;top:740px;width:24px;height:2px;background:#dedede;"></div>
<span class="t" id="row12" style="top:712.10px;font-size:20.5px;line-height:25px;color:#4a4a4a;left:2.6px;transform:translateX(-50%);">12</span>
<div style="left:0px;top:774px;width:24px;height:2px;background:#dedede;"></div>
<span class="t" id="row13" style="top:746.10px;font-size:20.5px;line-height:25px;color:#4a4a4a;left:2.6px;transform:translateX(-50%);">13</span>
<div style="left:0px;top:808px;width:24px;height:2px;background:#dedede;"></div>
<span class="t" id="row14" style="top:780.10px;font-size:20.5px;line-height:25px;color:#4a4a4a;left:2.6px;transform:translateX(-50%);">14</span>
<div style="left:0px;top:842px;width:24px;height:2px;background:#dedede;"></div>
<span class="t" id="row15" style="top:814.10px;font-size:20.5px;line-height:25px;color:#4a4a4a;left:2.6px;transform:translateX(-50%);">15</span>
<div style="left:0px;top:876px;width:24px;height:2px;background:#dedede;"></div>
<span class="t" id="row16" style="top:848.10px;font-size:20.5px;line-height:25px;color:#4a4a4a;left:2.6px;transform:translateX(-50%);">16</span>
<div style="left:0px;top:910px;width:24px;height:2px;background:#dedede;"></div>
<span class="t" id="row17" style="top:882.10px;font-size:20.5px;line-height:25px;color:#4a4a4a;left:2.6px;transform:translateX(-50%);">17</span>
<div style="left:0px;top:944px;width:24px;height:2px;background:#dedede;"></div>
<span class="t" id="row18" style="top:916.10px;font-size:20.5px;line-height:25px;color:#4a4a4a;left:2.6px;transform:translateX(-50%);">18</span>
<div style="left:0px;top:978px;width:24px;height:2px;background:#dedede;"></div>
<span class="t" id="row19" style="top:950.10px;font-size:20.5px;line-height:25px;color:#4a4a4a;left:2.6px;transform:translateX(-50%);">19</span>
<div style="left:0px;top:1012px;width:24px;height:2px;background:#dedede;"></div>
<span class="t" id="row20" style="top:984.10px;font-size:20.5px;line-height:25px;color:#4a4a4a;left:2.6px;transform:translateX(-50%);">20</span>
<div style="left:0px;top:1046px;width:24px;height:2px;background:#dedede;"></div>
<span class="t" id="row21" style="top:1018.10px;font-size:20.5px;line-height:25px;color:#4a4a4a;left:2.6px;transform:translateX(-50%);">21</span>
<div style="left:0px;top:1078px;width:24px;height:2px;background:#dedede;"></div>
<span class="t" id="row22" style="top:1052.10px;font-size:20.5px;line-height:25px;color:#4a4a4a;left:2.6px;transform:translateX(-50%);">22</span>
<div style="left:0px;top:1110px;width:24px;height:2px;background:#dedede;"></div>
<span class="t" id="row23" style="top:1084.10px;font-size:20.5px;line-height:25px;color:#4a4a4a;left:2.6px;transform:translateX(-50%);">23</span>
<div style="left:0px;top:1142px;width:24px;height:2px;background:#dedede;"></div>
<span class="t" id="row24" style="top:1116.10px;font-size:20.5px;line-height:25px;color:#4a4a4a;left:2.6px;transform:translateX(-50%);">24</span>
<div style="left:0px;top:1174px;width:24px;height:2px;background:#dedede;"></div>
<span class="t" id="row25" style="top:1148.10px;font-size:20.5px;line-height:25px;color:#4a4a4a;left:2.6px;transform:translateX(-50%);">25</span>
<div style="left:0px;top:1206px;width:24px;height:2px;background:#dedede;"></div>
<span class="t" id="row26" style="top:1180.10px;font-size:20.5px;line-height:25px;color:#4a4a4a;left:2.6px;transform:translateX(-50%);">26</span>
<div style="left:0px;top:1238px;width:24px;height:2px;background:#dedede;"></div>
<span class="t" id="row27" style="top:1212.10px;font-size:20.5px;line-height:25px;color:#4a4a4a;left:2.6px;transform:translateX(-50%);">27</span>
<div style="left:0px;top:1270px;width:24px;height:2px;background:#dedede;"></div>
<span class="t" id="row28" style="top:1244.10px;font-size:20.5px;line-height:25px;color:#4a4a4a;left:2.6px;transform:translateX(-50%);">28</span>
<div style="left:0px;top:1302px;width:24px;height:2px;background:#dedede;"></div>
<span class="t" id="row29" style="top:1276.10px;font-size:20.5px;line-height:25px;color:#4a4a4a;left:2.6px;transform:translateX(-50%);">29</span>
<div style="left:26px;top:334px;width:650px;height:34px;background:#dce1f1;border-bottom:4px solid #d7d7d7;"></div>
<span class="t" id="c0a" style="top:340.14px;font-size:19.5px;line-height:23px;color:#000;letter-spacing:-0.333px;left:66px;">Tarea 3</span>
<div style="left:288px;top:336px;width:112px;height:26px;background:#bfbfbf;"></div>
<span class="t" id="c0c" style="top:340.14px;font-size:19.5px;line-height:23px;color:#000;letter-spacing:0.500px;left:350px;transform:translateX(-50%);margin-left:0.250px;">90%</span>
<svg style="left:415.5px;top:334px;" width="13" height="13" viewBox="0 0 13 13"><path d="M0 0 H12.500 L0 12.500 Z" fill="#3a7d23"/></svg>
<span class="t" id="c0r480" style="top:340.14px;font-size:19.5px;line-height:23px;color:#000;letter-spacing:-0.800px;left:480px;transform:translateX(-50%);margin-left:-0.400px;">#¡REF!</span>
<svg style="left:545.5px;top:334px;" width="13" height="13" viewBox="0 0 13 13"><path d="M0 0 H12.500 L0 12.500 Z" fill="#3a7d23"/></svg>
<span class="t" id="c0r610" style="top:340.14px;font-size:19.5px;line-height:23px;color:#000;letter-spacing:-0.800px;left:610px;transform:translateX(-50%);margin-left:-0.400px;">#¡REF!</span>
<div style="left:26px;top:368px;width:650px;height:34px;background:#dce1f1;border-bottom:4px solid #d7d7d7;"></div>
<span class="t" id="c1a" style="top:374.14px;font-size:19.5px;line-height:23px;color:#000;letter-spacing:-0.500px;left:66px;">Tarea 4</span>
<div style="left:288px;top:370px;width:32px;height:26px;background:#bfbfbf;"></div>
<span class="t" id="c1c" style="top:374.14px;font-size:19.5px;line-height:23px;color:#000;letter-spacing:0.500px;left:350px;transform:translateX(-50%);margin-left:0.250px;">25%</span>
<svg style="left:415.5px;top:368px;" width="13" height="13" viewBox="0 0 13 13"><path d="M0 0 H12.500 L0 12.500 Z" fill="#3a7d23"/></svg>
<span class="t" id="c1r480" style="top:374.14px;font-size:19.5px;line-height:23px;color:#000;letter-spacing:-0.800px;left:480px;transform:translateX(-50%);margin-left:-0.400px;">#¡REF!</span>
<svg style="left:545.5px;top:368px;" width="13" height="13" viewBox="0 0 13 13"><path d="M0 0 H12.500 L0 12.500 Z" fill="#3a7d23"/></svg>
<span class="t" id="c1r610" style="top:374.14px;font-size:19.5px;line-height:23px;color:#000;letter-spacing:-0.800px;left:610px;transform:translateX(-50%);margin-left:-0.400px;">#¡REF!</span>
<div style="left:26px;top:402px;width:650px;height:34px;background:#dce1f1;border-bottom:4px solid #d7d7d7;"></div>
<span class="t" id="c2a" style="top:408.14px;font-size:19.5px;line-height:23px;color:#000;letter-spacing:-0.333px;left:66px;">Tarea 5</span>
<svg style="left:415.5px;top:402px;" width="13" height="13" viewBox="0 0 13 13"><path d="M0 0 H12.500 L0 12.500 Z" fill="#3a7d23"/></svg>
<span class="t" id="c2r480" style="top:408.14px;font-size:19.5px;line-height:23px;color:#000;letter-spacing:-0.800px;left:480px;transform:translateX(-50%);margin-left:-0.400px;">#¡REF!</span>
<svg style="left:545.5px;top:402px;" width="13" height="13" viewBox="0 0 13 13"><path d="M0 0 H12.500 L0 12.500 Z" fill="#3a7d23"/></svg>
<span class="t" id="c2r610" style="top:408.14px;font-size:19.5px;line-height:23px;color:#000;letter-spacing:-0.800px;left:610px;transform:translateX(-50%);margin-left:-0.400px;">#¡REF!</span>
<div style="left:26px;top:436px;width:650px;height:34px;background:#f3ccb0;border-bottom:4px solid #d7d7d7;"></div>
<span class="t" id="c3a" style="top:442.14px;font-size:19.5px;line-height:23px;color:#000;font-weight:bold;letter-spacing:-0.389px;left:48px;">Título de la fase 2</span>
<div style="left:26px;top:470px;width:650px;height:34px;background:#fae4d8;border-bottom:4px solid #d7d7d7;"></div>
<span class="t" id="c4a" style="top:476.14px;font-size:19.5px;line-height:23px;color:#000;letter-spacing:-0.333px;left:66px;">Tarea 1</span>
<div style="left:288px;top:472px;width:62px;height:26px;background:#bfbfbf;"></div>
<span class="t" id="c4c" style="top:476.14px;font-size:19.5px;line-height:23px;color:#000;letter-spacing:0.500px;left:350px;transform:translateX(-50%);margin-left:0.250px;">50%</span>
<svg style="left:415.5px;top:470px;" width="13" height="13" viewBox="0 0 13 13"><path d="M0 0 H12.500 L0 12.500 Z" fill="#3a7d23"/></svg>
<span class="t" id="c4r480" style="top:476.14px;font-size:19.5px;line-height:23px;color:#000;letter-spacing:-0.800px;left:480px;transform:translateX(-50%);margin-left:-0.400px;">#¡REF!</span>
<svg style="left:545.5px;top:470px;" width="13" height="13" viewBox="0 0 13 13"><path d="M0 0 H12.500 L0 12.500 Z" fill="#3a7d23"/></svg>
<span class="t" id="c4r610" style="top:476.14px;font-size:19.5px;line-height:23px;color:#000;letter-spacing:-0.800px;left:610px;transform:translateX(-50%);margin-left:-0.400px;">#¡REF!</span>
<div style="left:26px;top:504px;width:650px;height:34px;background:#fae4d8;border-bottom:4px solid #d7d7d7;"></div>
<span class="t" id="c5a" style="top:510.14px;font-size:19.5px;line-height:23px;color:#000;letter-spacing:-0.333px;left:66px;">Tarea 2</span>
<div style="left:288px;top:506px;width:62px;height:26px;background:#bfbfbf;"></div>
<span class="t" id="c5c" style="top:510.14px;font-size:19.5px;line-height:23px;color:#000;letter-spacing:0.500px;left:350px;transform:translateX(-50%);margin-left:0.250px;">50%</span>
<svg style="left:415.5px;top:504px;" width="13" height="13" viewBox="0 0 13 13"><path d="M0 0 H12.500 L0 12.500 Z" fill="#3a7d23"/></svg>
<span class="t" id="c5r480" style="top:510.14px;font-size:19.5px;line-height:23px;color:#000;letter-spacing:-0.800px;left:480px;transform:translateX(-50%);margin-left:-0.400px;">#¡REF!</span>
<svg style="left:545.5px;top:504px;" width="13" height="13" viewBox="0 0 13 13"><path d="M0 0 H12.500 L0 12.500 Z" fill="#3a7d23"/></svg>
<span class="t" id="c5r610" style="top:510.14px;font-size:19.5px;line-height:23px;color:#000;letter-spacing:-0.800px;left:610px;transform:translateX(-50%);margin-left:-0.400px;">#¡REF!</span>
<div style="left:26px;top:538px;width:650px;height:34px;background:#fae4d8;border-bottom:4px solid #d7d7d7;"></div>
<span class="t" id="c6a" style="top:544.14px;font-size:19.5px;line-height:23px;color:#000;letter-spacing:-0.333px;left:66px;">Tarea 3</span>
<svg style="left:415.5px;top:538px;" width="13" height="13" viewBox="0 0 13 13"><path d="M0 0 H12.500 L0 12.500 Z" fill="#3a7d23"/></svg>
<span class="t" id="c6r480" style="top:544.14px;font-size:19.5px;line-height:23px;color:#000;letter-spacing:-0.800px;left:480px;transform:translateX(-50%);margin-left:-0.400px;">#¡REF!</span>
<svg style="left:545.5px;top:538px;" width="13" height="13" viewBox="0 0 13 13"><path d="M0 0 H12.500 L0 12.500 Z" fill="#3a7d23"/></svg>
<span class="t" id="c6r610" style="top:544.14px;font-size:19.5px;line-height:23px;color:#000;letter-spacing:-0.800px;left:610px;transform:translateX(-50%);margin-left:-0.400px;">#¡REF!</span>
<div style="left:26px;top:572px;width:650px;height:34px;background:#fae4d8;border-bottom:4px solid #d7d7d7;"></div>
<span class="t" id="c7a" style="top:578.14px;font-size:19.5px;line-height:23px;color:#000;letter-spacing:-0.500px;left:66px;">Tarea 4</span>
<svg style="left:415.5px;top:572px;" width="13" height="13" viewBox="0 0 13 13"><path d="M0 0 H12.500 L0 12.500 Z" fill="#3a7d23"/></svg>
<span class="t" id="c7r480" style="top:578.14px;font-size:19.5px;line-height:23px;color:#000;letter-spacing:-0.800px;left:480px;transform:translateX(-50%);margin-left:-0.400px;">#¡REF!</span>
<svg style="left:545.5px;top:572px;" width="13" height="13" viewBox="0 0 13 13"><path d="M0 0 H12.500 L0 12.500 Z" fill="#3a7d23"/></svg>
<span class="t" id="c7r610" style="top:578.14px;font-size:19.5px;line-height:23px;color:#000;letter-spacing:-0.800px;left:610px;transform:translateX(-50%);margin-left:-0.400px;">#¡REF!</span>
<div style="left:26px;top:606px;width:650px;height:34px;background:#fae4d8;border-bottom:4px solid #d7d7d7;"></div>
<span class="t" id="c8a" style="top:612.14px;font-size:19.5px;line-height:23px;color:#000;letter-spacing:-0.333px;left:66px;">Tarea 5</span>
<svg style="left:415.5px;top:606px;" width="13" height="13" viewBox="0 0 13 13"><path d="M0 0 H12.500 L0 12.500 Z" fill="#3a7d23"/></svg>
<span class="t" id="c8r480" style="top:612.14px;font-size:19.5px;line-height:23px;color:#000;letter-spacing:-0.800px;left:480px;transform:translateX(-50%);margin-left:-0.400px;">#¡REF!</span>
<svg style="left:545.5px;top:606px;" width="13" height="13" viewBox="0 0 13 13"><path d="M0 0 H12.500 L0 12.500 Z" fill="#3a7d23"/></svg>
<span class="t" id="c8r610" style="top:612.14px;font-size:19.5px;line-height:23px;color:#000;letter-spacing:-0.800px;left:610px;transform:translateX(-50%);margin-left:-0.400px;">#¡REF!</span>
<div style="left:26px;top:640px;width:650px;height:34px;background:#d9d9d9;border-bottom:4px solid #d7d7d7;"></div>
<span class="t" id="c9a" style="top:646.14px;font-size:19.5px;line-height:23px;color:#000;font-weight:bold;letter-spacing:-0.389px;left:48px;">Título de la fase 3</span>
<div style="left:26px;top:674px;width:650px;height:34px;background:#ececec;border-bottom:4px solid #d7d7d7;"></div>
<span class="t" id="c10a" style="top:680.14px;font-size:19.5px;line-height:23px;color:#000;letter-spacing:-0.333px;left:66px;">Tarea 1</span>
<svg style="left:415.5px;top:674px;" width="13" height="13" viewBox="0 0 13 13"><path d="M0 0 H12.500 L0 12.500 Z" fill="#3a7d23"/></svg>
<span class="t" id="c10r480" style="top:680.14px;font-size:19.5px;line-height:23px;color:#000;letter-spacing:-0.800px;left:480px;transform:translateX(-50%);margin-left:-0.400px;">#¡REF!</span>
<svg style="left:545.5px;top:674px;" width="13" height="13" viewBox="0 0 13 13"><path d="M0 0 H12.500 L0 12.500 Z" fill="#3a7d23"/></svg>
<span class="t" id="c10r610" style="top:680.14px;font-size:19.5px;line-height:23px;color:#000;letter-spacing:-0.800px;left:610px;transform:translateX(-50%);margin-left:-0.400px;">#¡REF!</span>
<div style="left:26px;top:708px;width:650px;height:34px;background:#ececec;border-bottom:4px solid #d7d7d7;"></div>
<span class="t" id="c11a" style="top:714.14px;font-size:19.5px;line-height:23px;color:#000;letter-spacing:-0.333px;left:66px;">Tarea 2</span>
<svg style="left:415.5px;top:708px;" width="13" height="13" viewBox="0 0 13 13"><path d="M0 0 H12.500 L0 12.500 Z" fill="#3a7d23"/></svg>
<span class="t" id="c11r480" style="top:714.14px;font-size:19.5px;line-height:23px;color:#000;letter-spacing:-0.800px;left:480px;transform:translateX(-50%);margin-left:-0.400px;">#¡REF!</span>
<svg style="left:545.5px;top:708px;" width="13" height="13" viewBox="0 0 13 13"><path d="M0 0 H12.500 L0 12.500 Z" fill="#3a7d23"/></svg>
<span class="t" id="c11r610" style="top:714.14px;font-size:19.5px;line-height:23px;color:#000;letter-spacing:-0.800px;left:610px;transform:translateX(-50%);margin-left:-0.400px;">#¡REF!</span>
<div style="left:26px;top:742px;width:650px;height:34px;background:#ececec;border-bottom:4px solid #d7d7d7;"></div>
<span class="t" id="c12a" style="top:748.14px;font-size:19.5px;line-height:23px;color:#000;letter-spacing:-0.333px;left:66px;">Tarea 3</span>
<svg style="left:415.5px;top:742px;" width="13" height="13" viewBox="0 0 13 13"><path d="M0 0 H12.500 L0 12.500 Z" fill="#3a7d23"/></svg>
<span class="t" id="c12r480" style="top:748.14px;font-size:19.5px;line-height:23px;color:#000;letter-spacing:-0.800px;left:480px;transform:translateX(-50%);margin-left:-0.400px;">#¡REF!</span>
<svg style="left:545.5px;top:742px;" width="13" height="13" viewBox="0 0 13 13"><path d="M0 0 H12.500 L0 12.500 Z" fill="#3a7d23"/></svg>
<span class="t" id="c12r610" style="top:748.14px;font-size:19.5px;line-height:23px;color:#000;letter-spacing:-0.800px;left:610px;transform:translateX(-50%);margin-left:-0.400px;">#¡REF!</span>
<div style="left:26px;top:776px;width:650px;height:34px;background:#ececec;border-bottom:4px solid #d7d7d7;"></div>
<span class="t" id="c13a" style="top:782.14px;font-size:19.5px;line-height:23px;color:#000;letter-spacing:-0.500px;left:66px;">Tarea 4</span>
<svg style="left:415.5px;top:776px;" width="13" height="13" viewBox="0 0 13 13"><path d="M0 0 H12.500 L0 12.500 Z" fill="#3a7d23"/></svg>
<span class="t" id="c13r480" style="top:782.14px;font-size:19.5px;line-height:23px;color:#000;letter-spacing:-0.800px;left:480px;transform:translateX(-50%);margin-left:-0.400px;">#¡REF!</span>
<svg style="left:545.5px;top:776px;" width="13" height="13" viewBox="0 0 13 13"><path d="M0 0 H12.500 L0 12.500 Z" fill="#3a7d23"/></svg>
<span class="t" id="c13r610" style="top:782.14px;font-size:19.5px;line-height:23px;color:#000;letter-spacing:-0.800px;left:610px;transform:translateX(-50%);margin-left:-0.400px;">#¡REF!</span>
<div style="left:26px;top:810px;width:650px;height:34px;background:#ececec;border-bottom:4px solid #d7d7d7;"></div>
<span class="t" id="c14a" style="top:816.14px;font-size:19.5px;line-height:23px;color:#000;letter-spacing:-0.333px;left:66px;">Tarea 5</span>
<svg style="left:415.5px;top:810px;" width="13" height="13" viewBox="0 0 13 13"><path d="M0 0 H12.500 L0 12.500 Z" fill="#3a7d23"/></svg>
<span class="t" id="c14r480" style="top:816.14px;font-size:19.5px;line-height:23px;color:#000;letter-spacing:-0.800px;left:480px;transform:translateX(-50%);margin-left:-0.400px;">#¡REF!</span>
<svg style="left:545.5px;top:810px;" width="13" height="13" viewBox="0 0 13 13"><path d="M0 0 H12.500 L0 12.500 Z" fill="#3a7d23"/></svg>
<span class="t" id="c14r610" style="top:816.14px;font-size:19.5px;line-height:23px;color:#000;letter-spacing:-0.800px;left:610px;transform:translateX(-50%);margin-left:-0.400px;">#¡REF!</span>
<div style="left:26px;top:844px;width:650px;height:34px;background:#fde5a0;border-bottom:4px solid #d7d7d7;"></div>
<span class="t" id="c15a" style="top:850.14px;font-size:19.5px;line-height:23px;color:#000;font-weight:bold;letter-spacing:-0.444px;left:48px;">Título de la fase 4</span>
<div style="left:26px;top:878px;width:650px;height:34px;background:#fff2d0;border-bottom:4px solid #d7d7d7;"></div>
<span class="t" id="c16a" style="top:884.14px;font-size:19.5px;line-height:23px;color:#000;letter-spacing:-0.333px;left:66px;">Tarea 1</span>
<span class="t" id="c16r480" style="top:884.14px;font-size:19.5px;line-height:23px;color:#000;letter-spacing:-0.125px;left:480px;transform:translateX(-50%);margin-left:-0.062px;">fecha</span>
<span class="t" id="c16r610" style="top:884.14px;font-size:19.5px;line-height:23px;color:#000;letter-spacing:-0.125px;left:610px;transform:translateX(-50%);margin-left:-0.062px;">fecha</span>
<div style="left:26px;top:912px;width:650px;height:34px;background:#fff2d0;border-bottom:4px solid #d7d7d7;"></div>
<span class="t" id="c17a" style="top:918.14px;font-size:19.5px;line-height:23px;color:#000;letter-spacing:-0.333px;left:66px;">Tarea 2</span>
<span class="t" id="c17r480" style="top:918.14px;font-size:19.5px;line-height:23px;color:#000;letter-spacing:-0.125px;left:480px;transform:translateX(-50%);margin-left:-0.062px;">fecha</span>
<span class="t" id="c17r610" style="top:918.14px;font-size:19.5px;line-height:23px;color:#000;letter-spacing:-0.125px;left:610px;transform:translateX(-50%);margin-left:-0.062px;">fecha</span>
<div style="left:26px;top:946px;width:650px;height:34px;background:#fff2d0;border-bottom:4px solid #d7d7d7;"></div>
<span class="t" id="c18a" style="top:952.14px;font-size:19.5px;line-height:23px;color:#000;letter-spacing:-0.333px;left:66px;">Tarea 3</span>
<span class="t" id="c18r480" style="top:952.14px;font-size:19.5px;line-height:23px;color:#000;letter-spacing:-0.125px;left:480px;transform:translateX(-50%);margin-left:-0.062px;">fecha</span>
<span class="t" id="c18r610" style="top:952.14px;font-size:19.5px;line-height:23px;color:#000;letter-spacing:-0.125px;left:610px;transform:translateX(-50%);margin-left:-0.062px;">fecha</span>
<div style="left:26px;top:980px;width:650px;height:34px;background:#fff2d0;border-bottom:4px solid #d7d7d7;"></div>
<span class="t" id="c19a" style="top:986.14px;font-size:19.5px;line-height:23px;color:#000;letter-spacing:-0.500px;left:66px;">Tarea 4</span>
<span class="t" id="c19r480" style="top:986.14px;font-size:19.5px;line-height:23px;color:#000;letter-spacing:-0.125px;left:480px;transform:translateX(-50%);margin-left:-0.062px;">fecha</span>
<span class="t" id="c19r610" style="top:986.14px;font-size:19.5px;line-height:23px;color:#000;letter-spacing:-0.125px;left:610px;transform:translateX(-50%);margin-left:-0.062px;">fecha</span>
<div style="left:26px;top:1014px;width:650px;height:34px;background:#fff2d0;border-bottom:4px solid #d7d7d7;"></div>
<span class="t" id="c20a" style="top:1020.14px;font-size:19.5px;line-height:23px;color:#000;letter-spacing:-0.333px;left:66px;">Tarea 5</span>
<span class="t" id="c20r480" style="top:1020.14px;font-size:19.5px;line-height:23px;color:#000;letter-spacing:-0.125px;left:480px;transform:translateX(-50%);margin-left:-0.062px;">fecha</span>
<span class="t" id="c20r610" style="top:1020.14px;font-size:19.5px;line-height:23px;color:#000;letter-spacing:-0.125px;left:610px;transform:translateX(-50%);margin-left:-0.062px;">fecha</span>
<div style="left:22px;top:330px;width:136px;height:40px;border:4px solid #3a7a50;box-shadow:inset 0 0 0 1px #fff;"></div>
<div style="left:149.5px;top:361.5px;width:10.5px;height:10.5px;background:#3a7a50;border:1.500px solid #fff;border-right:0;border-bottom:0;"></div>
<div style="left:22px;top:330px;width:4px;height:2px;background:#f1f1f1;"></div>
<div style="left:22px;top:332px;width:4px;height:2px;background:#b9b9b9;"></div>
<div style="left:24px;top:330px;width:2px;height:2px;background:#c4c4c4;"></div>
<div style="left:682.5px;top:1056px;width:47px;height:44px;border:1.500px solid #9d9d9d;border-radius:5.500px;background:linear-gradient(#fdfdfd,#f4f4f4);box-shadow:0 1px 2px rgba(0,0,0,.25);"></div>
<svg style="left:692px;top:1060px;" width="32" height="36" viewBox="0 0 32 36"><path d="M3 7 H25 V33 H3 Z" fill="#fafafa" stroke="#e0853a" stroke-width="2"/><path d="M5 9 V31 H14" fill="none" stroke="#f8df9c" stroke-width="2"/><path d="M7 13 V7.500 H10.500 Q10.500 3 14 3 Q17.500 3 17.500 7.500 H21 V13 Z" fill="#fafafa" stroke="#777" stroke-width="2" stroke-linejoin="round"/><rect x="16" y="16" width="15" height="19" fill="#fff"/><rect x="17" y="17" width="12" height="16" fill="#fbfbfb" stroke="#2f2f2f" stroke-width="2"/></svg>
</div>
</body></html>
